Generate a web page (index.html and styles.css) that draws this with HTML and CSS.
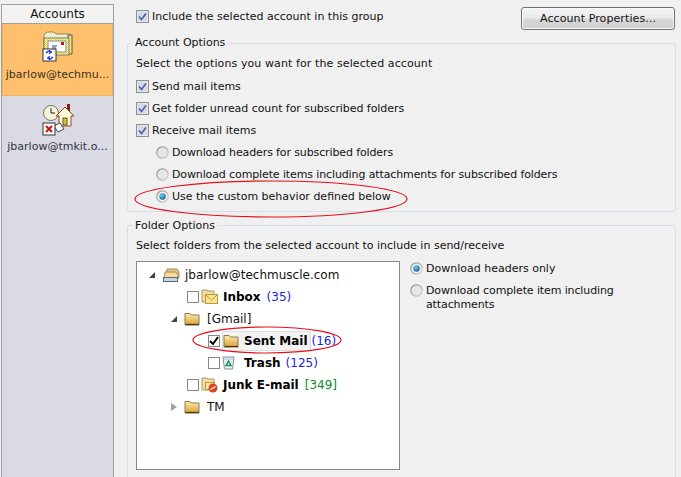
FILE: index.html
```html
<!DOCTYPE html>
<html>
<head>
<meta charset="utf-8">
<title>Accounts</title>
<link rel="stylesheet" href="styles.css">
</head>
<body>
<svg class="defs" width="0" height="0">
  <defs>
    <linearGradient id="fold" x1="0" y1="0" x2="0" y2="1"><stop offset="0" stop-color="#fdeeb0"/><stop offset="1" stop-color="#d99f2e"/></linearGradient>
    <pattern id="dither" width="2" height="2" patternUnits="userSpaceOnUse"><rect width="2" height="2" fill="#fdfdc0"/><rect width="1" height="1" fill="#e6d830"/><rect x="1" y="1" width="1" height="1" fill="#e6d830"/></pattern>
    <symbol id="folder" viewBox="0 0 16 14">
      <path d="M1 1.500h5l1.500 1.500h7.500v10h-14z" fill="url(#fold)" stroke="#8a7a50"/>
      <path d="M1.500 12.500h13.500" stroke="#4a3a1c" stroke-width="1.200"/>
    </symbol>
    <symbol id="check" viewBox="0 0 13 13">
      <rect x="0.500" y="0.500" width="12" height="12" fill="#e4e6ee" stroke="#8e8f8f"/>
      <rect x="2" y="2" width="9" height="9" fill="#d5d8e6"/>
      <path d="M3 6.500l2.500 3 4.500-6" fill="none" stroke="#4a5fa8" stroke-width="1.600"/>
    </symbol>
    <radialGradient id="dot" cx=".4" cy=".35" r=".8"><stop offset="0" stop-color="#6fd0f5"/><stop offset="1" stop-color="#0b4a78"/></radialGradient>
    <linearGradient id="rim" x1="0" y1="0" x2="1" y2="1"><stop offset="0" stop-color="#8c8c8c"/><stop offset="1" stop-color="#d8d8d8"/></linearGradient>
    <symbol id="radio-off" viewBox="0 0 13 13">
      <circle cx="6.500" cy="6.500" r="5.700" fill="#e6e6e6" stroke="url(#rim)" stroke-width="1.200"/>
    </symbol>
    <symbol id="radio-on" viewBox="0 0 13 13">
      <circle cx="6.500" cy="6.500" r="5.700" fill="#f2f2f2" stroke="url(#rim)" stroke-width="1.200"/>
      <circle cx="6.500" cy="6.500" r="3.200" fill="url(#dot)"/>
    </symbol>
  </defs>
</svg>
<div class="window">
  <aside class="sidebar">
    <div class="side-head">Accounts</div>
    <div class="acct acct-sel">
      <svg class="acct-icon" width="32" height="32" viewBox="0 0 32 32">
        <path d="M2 5l3-3h7l2 2h14v20H2z" fill="#f0eecc" stroke="#8a8a50"/>
        <path d="M26 5h4v19h-4z" fill="url(#dither)" stroke="#555"/>
        <rect x="2" y="8" width="25" height="17" fill="url(#dither)" stroke="#777"/>
        <rect x="6" y="11" width="18" height="11" fill="#fff" stroke="#888"/>
        <rect x="19" y="12" width="3" height="3" fill="#c01818"/>
        <path d="M10 16h5M10 18h4" stroke="#2040a0"/>
        <rect x="1" y="19" width="13" height="12" fill="#fff" stroke="#333"/>
        <path d="M4 23a3 3 0 0 1 4-2l-1-1 3 2-3 2 1-2a2 2 0 0 0-3 1zM11 27a3 3 0 0 1-4 2l1 1-3-2 3-2-1 2a2 2 0 0 0 3-1z" fill="#1030c0" stroke="#1030c0" stroke-width=".6"/>
      </svg>
      <span class="acct-name">jbarlow@techmu...</span>
    </div>
    <div class="acct acct-second">
      <svg class="acct-icon" width="32" height="32" viewBox="0 0 32 32">
        <circle cx="9" cy="9" r="7.500" fill="#f4f2d8" stroke="#777"/>
        <path d="M9 4v5h4" fill="none" stroke="#222"/>
        <path d="M25 0h3v8h-3z" fill="#8b1a1a"/>
        <path d="M14 12L23 3l9 9h-3v10H17V12z" fill="#fffde0" stroke="#a04010"/>
        <rect x="21" y="14" width="4" height="7" fill="#e0c020" stroke="#554"/>
        <path d="M12 22l6-3 4 6-6 3z" fill="#fff" stroke="#444"/>
        <rect x="1" y="19" width="12" height="12" fill="#fff" stroke="#333"/>
        <path d="M4 22l6 6M10 22l-6 6" stroke="#d01010" stroke-width="2"/>
      </svg>
      <span class="acct-name">jbarlow@tmkit.o...</span>
    </div>
  </aside>
  <main class="main">
    <div class="top-row">
      <label class="opt"><svg class="ck"><use href="#check"/></svg>Include the selected account in this group</label>
      <button class="btn">Account Properties...</button>
    </div>
    <section class="group group-account">
      <h2 class="legend">Account Options</h2>
      <p class="hint wide">Select the options you want for the selected account</p>
      <label class="opt row"><svg class="ck"><use href="#check"/></svg>Send mail items</label>
      <label class="opt row"><svg class="ck"><use href="#check"/></svg><span class="slim">Get folder unread count for subscribed folders</span></label>
      <label class="opt row"><svg class="ck"><use href="#check"/></svg>Receive mail items</label>
      <label class="opt row sub"><svg class="ck"><use href="#radio-off"/></svg><span class="narrow">Download headers for subscribed folders</span></label>
      <label class="opt row sub"><svg class="ck"><use href="#radio-off"/></svg><span class="narrow">Download complete items including attachments for subscribed folders</span></label>
      <label class="opt row sub"><svg class="ck"><use href="#radio-on"/></svg>Use the custom behavior defined below</label>
      <svg class="ring ring-custom" width="276" height="40" viewBox="0 0 276 40"><ellipse cx="138" cy="20" rx="136" ry="18" fill="none" stroke="#e3101c" stroke-width="1.200"/></svg>
    </section>
    <section class="group group-folder">
      <h2 class="legend">Folder Options</h2>
      <p class="hint">Select folders from the selected account to include in send/receive</p>
      <div class="folder-body">
        <div class="tree">
          <div class="node"><span class="arrow open"></span>
            <svg class="ic" width="18" height="15" viewBox="0 0 18 15"><path d="M5 1h10l2 3v6H3z" fill="#eec77a" stroke="#9a8a60"/><path d="M3 4h11l2 3v4H2z" fill="#f7dc9a" stroke="#9a8a60"/><rect x="1.500" y="9.500" width="14" height="4" fill="#c9d3e0" stroke="#5a6a80"/></svg>
            <span>jbarlow@techmuscle.com</span></div>
          <div class="node lv1"><span class="box"></span>
            <svg class="ic" width="17" height="16" viewBox="0 0 17 16"><path d="M1 1h5l1 1h6v11H1z" fill="#f4dd9e" stroke="#a8986c"/><rect x="4.500" y="5.500" width="12" height="9" fill="#fbe58e" stroke="#b89a3a"/><path d="M5 6l5.500 5L16 6" fill="none" stroke="#b89a3a"/></svg>
            <b class="nm">Inbox</b><span class="count">(35)</span></div>
          <div class="node lv1b"><span class="arrow open"></span>
            <svg class="ic ic-wide" width="16" height="14"><use href="#folder"/></svg>
            <span>[Gmail]</span></div>
          <div class="node lv2"><span class="box"><svg class="tick" width="10" height="10" viewBox="0 0 10 10"><path d="M1 5l3 3 5-7" fill="none" stroke="#000" stroke-width="2"/></svg></span>
            <span class="hi"><svg class="ic" width="16" height="14"><use href="#folder"/></svg><b class="nm">Sent Mail</b></span><span class="count tight">(16)</span>
            <svg class="ring ring-sent" width="150" height="28" viewBox="0 0 150 28"><ellipse cx="75" cy="14" rx="74" ry="13" fill="none" stroke="#e3101c" stroke-width="1.200"/></svg></div>
          <div class="node lv2"><span class="box"></span>
            <svg class="ic" width="13" height="14" viewBox="0 0 13 14"><path d="M1 1h11l-1.500 12h-8z" fill="#eef3f6" stroke="#7b8ea0"/><path d="M1 3h11" stroke="#a8c0d0"/><path d="M6.500 5L9 9.500H4z" fill="none" stroke="#14903a" stroke-width="1.400"/></svg>
            <b class="nm nm-trash">Trash</b><span class="count">(125)</span></div>
          <div class="node lv1"><span class="box"></span>
            <svg class="ic" width="17" height="16" viewBox="0 0 17 16"><path d="M1 1h5l1 1h6v11H1z" fill="#f4dd9e" stroke="#a8986c"/><rect x="4.500" y="5.500" width="9" height="7" fill="#fbe9b0" stroke="#b89a3a"/><circle cx="12" cy="11" r="4.500" fill="#e0431a"/><path d="M9.500 12.500l5-3" stroke="#fff" stroke-width="1.300"/></svg>
            <b class="nm">Junk E-mail</b><span class="count green">[349]</span></div>
          <div class="node lv1b"><span class="arrow closed"></span>
            <svg class="ic ic-wide" width="16" height="14"><use href="#folder"/></svg>
            <span>TM</span></div>
        </div>
        <div class="dl-opts">
          <label class="opt dl"><svg class="ck"><use href="#radio-on"/></svg>Download headers only</label>
          <label class="opt dl dl-top"><svg class="ck"><use href="#radio-off"/></svg><span class="narrow">Download complete item including<br>attachments</span></label>
        </div>
      </div>
    </section>
  </main>
</div>
</body>
</html>
```
FILE: styles.css
```css
* { box-sizing: border-box; }
html, body { margin: 0; padding: 0; }
body {
  width: 681px; height: 477px; overflow: hidden;
  background: #f0f0f0; color: #111;
  font-family: "DejaVu Sans", sans-serif; font-size: 11px;
}
.defs { position: absolute; }
.window { display: flex; height: 477px; overflow: hidden; }
.wide { letter-spacing: .1px; }
.narrow { letter-spacing: -.12px; }
.slim { letter-spacing: -.06px; }

.sidebar {
  flex: none; width: 113px; margin: 4px 0 0 1px;
  border: 1px solid #a0a0a0; border-bottom: 0;
  background: #dadae4;
}
.side-head {
  height: 19px; line-height: 18px; text-align: center; font-size: 12px;
  background: #f2f2f2; border-bottom: 1px solid #a0a0a0;
}
.acct { height: 72px; display: flex; flex-direction: column; align-items: center; padding-top: 6px; color: #33333c; }
.acct-sel { background: #ffc06e; border: 1px solid #f0b060; border-width: 0 1px 1px; color: #3a3020; }
.acct-second { padding-top: 8px; }
.acct-icon { flex: none; }
.acct-name { margin-top: 6px; white-space: nowrap; }
.acct-second .acct-name { margin-top: 4px; }

.main { flex: 1; min-width: 0; padding: 0 5px 0 13px; }
.opt { display: flex; align-items: center; white-space: nowrap; }
.ck { flex: none; width: 13px; height: 13px; margin-right: 3px; }
.top-row { height: 38px; display: flex; justify-content: space-between; padding-left: 9px; }
.top-row .opt { height: 20px; margin-top: 6px; }
.btn {
  width: 154px; height: 23px; margin-top: 7px; margin-right: 1px; padding: 0;
  font: inherit; color: #111; letter-spacing: .1px;
  border: 1px solid #707070; border-radius: 3px;
  background: linear-gradient(#f4f4f4 0, #ebebeb 48%, #d8d8d8 52%, #cfcfcf 100%);
  box-shadow: inset 0 0 0 1px #fbfbfb;
}
.group {
  position: relative; margin: 0;
  border: 1px solid #d5dfe5; border-radius: 3px;
  padding: 0 8px;
}
.group-account { height: 169px; margin-top: 5px; }
.group-folder { height: 260px; margin-top: 13px; border-bottom: 0; }
.legend {
  position: absolute; top: -8px; left: 5px; margin: 0; padding: 0 2px;
  background: #f0f0f0; font: inherit; font-weight: 400; line-height: 14px;
}
.group-folder .legend { top: -7px; }
.hint { margin: 9px 0 0; height: 22px; line-height: 22px; }
.row { height: 22px; }
.sub { padding-left: 20px; }
.ring { position: absolute; pointer-events: none; }
.ring-custom { left: 5px; top: 135px; }

.folder-body { display: flex; margin-top: 4px; }
.tree {
  width: 264px; height: 209px; flex: none;
  background: #fff; border: 1px solid #828790; padding-top: 2px;
}
.node { position: relative; display: flex; align-items: center; height: 22px; white-space: nowrap; font-size: 12px; padding-left: 12px; }
.lv1 { padding-left: 50px; }
.lv1b { padding-left: 34px; }
.lv2 { padding-left: 71px; }
.arrow { width: 0; height: 0; flex: none; margin-right: 7px; border: 4px solid transparent; }
.arrow.open { border-width: 0 0 6px 6px; border-color: transparent transparent #444; }
.arrow.closed { border-width: 4px 0 4px 6px; border-left-color: #a0a0a0; }
.ic { flex: none; margin-right: 5px; }
.ic-wide { margin-right: 7px; }
.box {
  display: flex; align-items: center; justify-content: center;
  width: 12px; height: 12px; flex: none; margin-right: 2px;
  border: 1px solid #888; background: #fff;
}
.tick { flex: none; }
.nm { font-weight: 700; color: #000; margin-right: 6px; }
.nm-trash { margin-left: 4px; margin-right: 5px; }
.count { color: #2222e0; }
.count.green { color: #0b8a30; }
.count.tight { margin-left: 1px; }
.hi { display: flex; align-items: center; height: 20px; padding-right: 2px; background: #f3f3f3; border: 1px solid #dedede; border-radius: 2px; }
.hi .ic { margin-right: 3px; }
.hi .nm { margin: 0 0 0 2px; }
.ring-sent { left: 55px; top: -4px; }

.dl-opts { padding-left: 10px; }
.dl { height: 14px; }
.dl-top { height: 28px; margin-top: 9px; align-items: flex-start; line-height: 14px; }
```
